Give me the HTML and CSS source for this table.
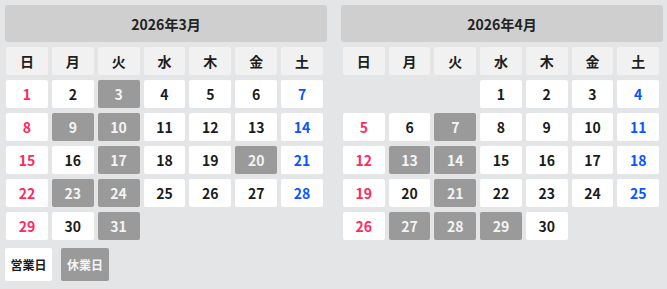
FILE: index.html
```html
<!DOCTYPE html>
<html lang="ja">
<head>
<meta charset="utf-8">
<title>営業日カレンダー</title>
<link rel="stylesheet" href="styles.css">
</head>
<body>
<div class="page">
  <div class="calendars">
    <section class="cal">
      <div class="cal-title">2026年3月</div>
      <div class="grid">
        <div class="wd">日</div><div class="wd">月</div><div class="wd">火</div><div class="wd">水</div><div class="wd">木</div><div class="wd">金</div><div class="wd">土</div>
        <div class="d sun">1</div><div class="d">2</div><div class="d off">3</div><div class="d">4</div><div class="d">5</div><div class="d">6</div><div class="d sat">7</div>
        <div class="d sun">8</div><div class="d off">9</div><div class="d off">10</div><div class="d">11</div><div class="d">12</div><div class="d">13</div><div class="d sat">14</div>
        <div class="d sun">15</div><div class="d">16</div><div class="d off">17</div><div class="d">18</div><div class="d">19</div><div class="d off">20</div><div class="d sat">21</div>
        <div class="d sun">22</div><div class="d off">23</div><div class="d off">24</div><div class="d">25</div><div class="d">26</div><div class="d">27</div><div class="d sat">28</div>
        <div class="d sun">29</div><div class="d">30</div><div class="d off">31</div>
      </div>
    </section>
    <section class="cal cal-right">
      <div class="cal-title">2026年4月</div>
      <div class="grid">
        <div class="wd">日</div><div class="wd">月</div><div class="wd">火</div><div class="wd">水</div><div class="wd">木</div><div class="wd">金</div><div class="wd">土</div>
        <div class="blank"></div><div class="blank"></div><div class="blank"></div><div class="d">1</div><div class="d">2</div><div class="d">3</div><div class="d sat">4</div>
        <div class="d sun">5</div><div class="d">6</div><div class="d off">7</div><div class="d">8</div><div class="d">9</div><div class="d">10</div><div class="d sat">11</div>
        <div class="d sun">12</div><div class="d off">13</div><div class="d off">14</div><div class="d">15</div><div class="d">16</div><div class="d">17</div><div class="d sat">18</div>
        <div class="d sun">19</div><div class="d">20</div><div class="d off">21</div><div class="d">22</div><div class="d">23</div><div class="d">24</div><div class="d sat">25</div>
        <div class="d sun">26</div><div class="d off">27</div><div class="d off">28</div><div class="d off">29</div><div class="d">30</div>
      </div>
    </section>
  </div>
  <div class="legend">
    <span class="tag tag-open">営業日</span>
    <span class="tag tag-off">休業日</span>
  </div>
</div>
</body>
</html>
```
FILE: styles.css
```css
html, body {
  margin: 0;
  padding: 0;
}
body {
  background: #e4e5e7;
  font-family: "Noto Sans CJK JP", "Noto Sans", sans-serif;
  font-weight: 700;
  color: #1b1b1b;
}
.page {
  padding: 5px 4px 0 5px;
}
.calendars {
  display: flex;
  gap: 14px;
}
.cal {
  flex: 1;
  min-width: 0;
}
.cal-title {
  height: 37px;
  display: flex;
  align-items: center;
  justify-content: center;
  background: #cfcfcf;
  border-radius: 3px;
  font-size: 14px;
  color: #222;
  margin-bottom: 5px;
}
.grid {
  display: grid;
  grid-template-columns: repeat(7, 1fr);
  grid-auto-rows: 28px;
  column-gap: 4px;
  row-gap: 5px;
  padding: 0 4px 0 1px;
}
.cal-right .grid {
  padding-left: 2px;
}
.wd, .d {
  display: flex;
  align-items: center;
  justify-content: center;
  border-radius: 2px;
  font-size: 14px;
  line-height: 1;
}
.wd {
  background: #f1f1f1;
  color: #1e1e1e;
}
.d {
  background: #ffffff;
}
.d.sun {
  color: #ff2a5c;
}
.d.sat {
  color: #0a55ff;
}
.d.off {
  background: #9a9a9a;
  color: #f4f4f4;
}
.legend {
  display: flex;
  gap: 9px;
  margin-top: 8px;
}
.tag {
  height: 33px;
  width: 47px;
  display: flex;
  align-items: center;
  justify-content: center;
  border-radius: 2px;
  font-size: 12px;
}
.tag-open {
  background: #ffffff;
  color: #1b1b1b;
}
.tag-off {
  width: 48px;
  background: #9a9a9a;
  color: #f4f4f4;
}
```
